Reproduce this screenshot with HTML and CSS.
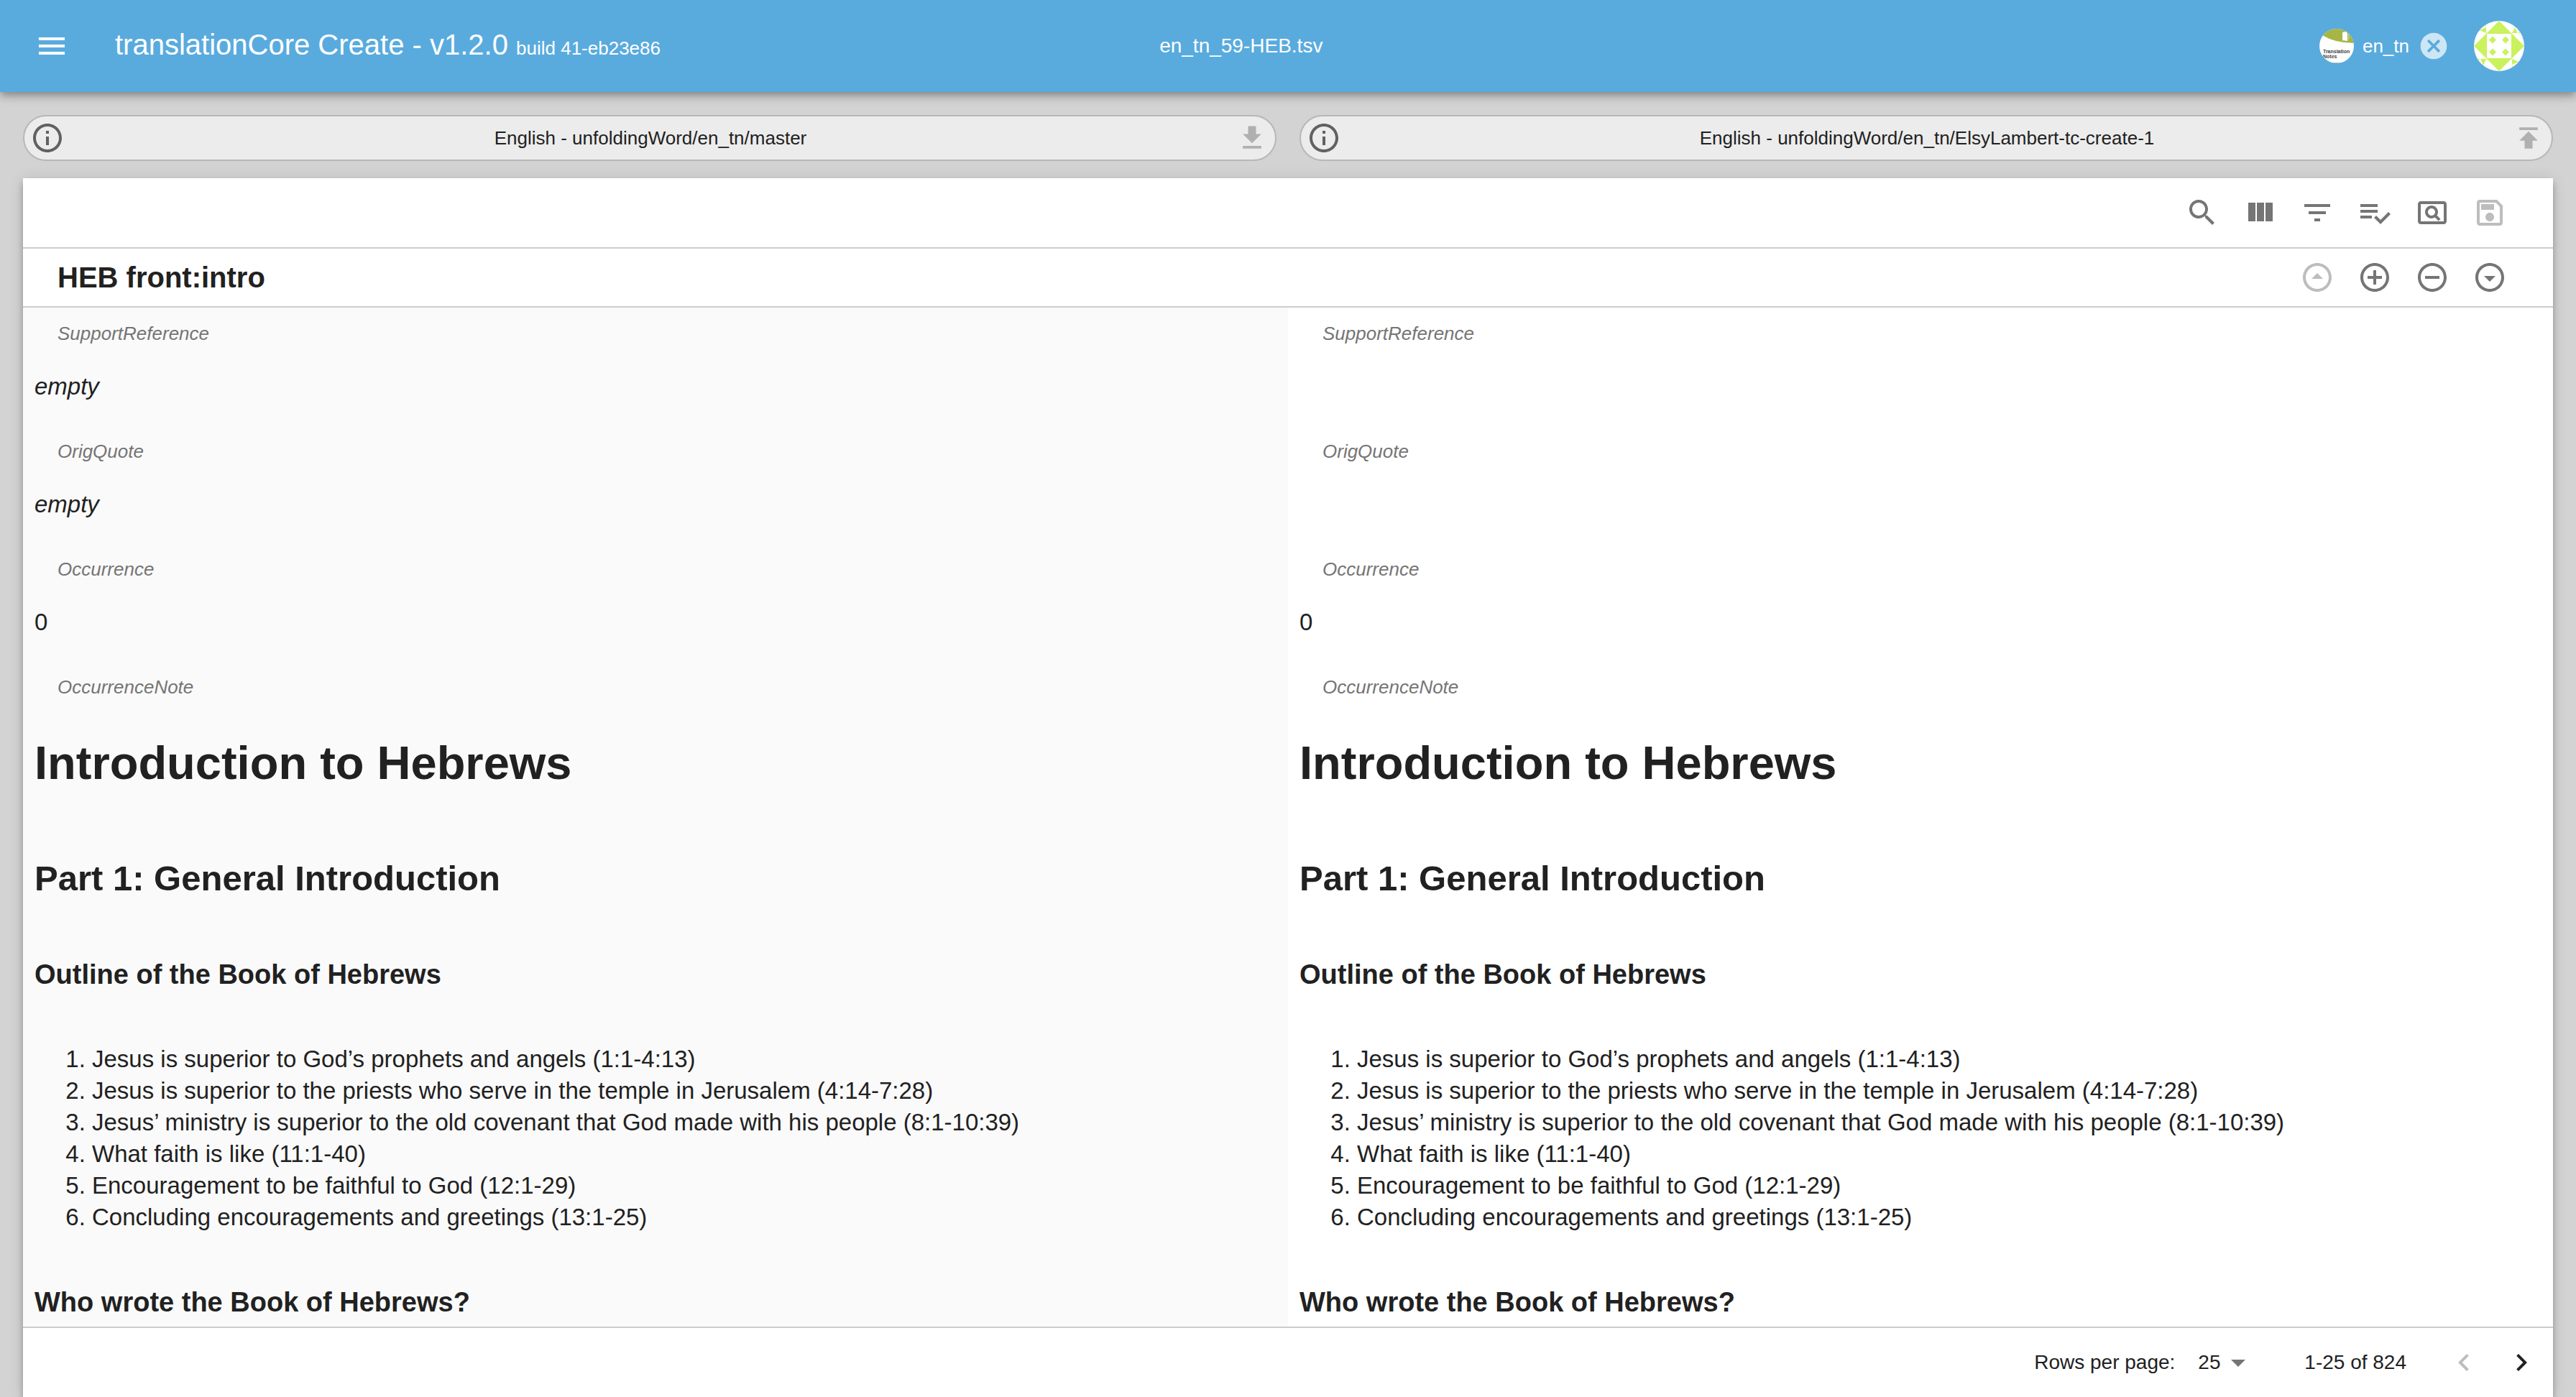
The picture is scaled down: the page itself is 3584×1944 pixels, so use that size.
FILE: index.html
```html
<!DOCTYPE html>
<html lang="en">
<head>
<meta charset="utf-8">
<title>translationCore Create</title>
<link rel="stylesheet" href="styles.css">
</head>
<body>
<header class="app-bar">
  <div class="brand">
    <button class="icon-btn" type="button" aria-label="Menu"><svg class="icon" viewBox="0 0 24 24"><path d="M3 18h18v-2H3v2zm0-5h18v-2H3v2zm0-7v2h18V6H3z"/></svg></button>
    <h1 class="brand-title">translationCore Create - v1.2.0 <small class="build">build 41-eb23e86</small></h1>
  </div>
  <p class="file-name">en_tn_59-HEB.tsv</p>
  <div class="account">
    <div class="repo">
      <svg class="repo-logo" viewBox="0 0 48 48" aria-hidden="true">
        <defs><clipPath id="logo-clip"><circle cx="24" cy="24" r="24"/></clipPath></defs>
        <g clip-path="url(#logo-clip)">
          <rect width="48" height="48" fill="#fff"/>
          <path d="M0 0H48V20Q22 20 4 9L0 6z" fill="#a5b645"/>
          <path d="M32 5l6-1v2h1v11l-7-1z" fill="#fff"/>
          <path d="M38 6h3v8h-3" fill="none" stroke="#d3dba5"/>
          <path d="M12 47.500H36V48H12z" fill="#8a7a5a"/>
          <text class="logo-text" x="5" y="34">Translation</text>
          <text class="logo-text" x="5" y="41">Notes</text>
        </g>
      </svg>
      <span class="repo-name">en_tn</span>
      <button class="icon-btn repo-clear" type="button" aria-label="Remove en_tn"><svg class="icon icon-sm" viewBox="0 0 24 24"><path d="M12 2C6.470 2 2 6.470 2 12s4.470 10 10 10 10-4.470 10-10S17.530 2 12 2zm5 13.590L15.590 17 12 13.410 8.410 17 7 15.590 10.590 12 7 8.410 8.410 7 12 10.590 15.590 7 17 8.410 13.410 12 17 15.590z"/></svg></button>
    </div>
    <button class="icon-btn" type="button" aria-label="Account">
      <svg class="avatar" viewBox="0 0 70 70">
        <defs><clipPath id="avatar-clip"><circle cx="35" cy="35" r="35"/></clipPath></defs>
        <g clip-path="url(#avatar-clip)">
          <rect width="70" height="70" fill="#fff"/>
          <g fill="#c9f25c">
            <path d="M35 0L52 17H18zM35 70L52 53H18zM0 35L17 18V52zM70 35L53 18V52z"/>
            <path d="M17 0v8L8 4zM17 9v8L8 13zM57 9l4 8h-8zM66 9l4 8h-8zM53 53l9 4-9 4zM53 62l9 4-9 4zM0 53h8l-4 9zM9 53h8l-4 9z"/>
            <path d="M17 17H53V53H17zM18 18V52H52V18z" fill-rule="evenodd"/>
            <path d="M26 21.500l5 5-5 5-5-5zM44 21.500l5 5-5 5-5-5zM26 38.500l5 5-5 5-5-5zM44 38.500l5 5-5 5-5-5z"/>
          </g>
        </g>
      </svg>
    </button>
  </div>
</header>

<main class="page">
  <div class="sources">
    <div class="chip">
      <button class="icon-btn chip-info" type="button" aria-label="Source information"><svg class="icon" viewBox="0 0 24 24"><path d="M11 17h2v-6h-2v6zm1-15C6.480 2 2 6.480 2 12s4.480 10 10 10 10-4.480 10-10S17.520 2 12 2zm0 18c-4.410 0-8-3.590-8-8s3.590-8 8-8 8 3.590 8 8-3.590 8-8 8zM11 9h2V7h-2v2z"/></svg></button>
      <span class="chip-label">English - unfoldingWord/en_tn/master</span>
      <button class="icon-btn chip-action" type="button" aria-label="Download"><svg class="icon icon-sm" viewBox="0 0 24 24"><path d="M19 9h-4V3H9v6H5l7 7 7-7zM5 18v2h14v-2H5z"/></svg></button>
    </div>
    <div class="chip">
      <button class="icon-btn chip-info" type="button" aria-label="Target information"><svg class="icon" viewBox="0 0 24 24"><path d="M11 17h2v-6h-2v6zm1-15C6.480 2 2 6.480 2 12s4.480 10 10 10 10-4.480 10-10S17.520 2 12 2zm0 18c-4.410 0-8-3.590-8-8s3.590-8 8-8 8 3.590 8 8-3.590 8-8 8zM11 9h2V7h-2v2z"/></svg></button>
      <span class="chip-label">English - unfoldingWord/en_tn/ElsyLambert-tc-create-1</span>
      <button class="icon-btn chip-action" type="button" aria-label="Publish"><svg class="icon icon-sm" viewBox="0 0 24 24"><path d="M5 4v2h14V4H5zm0 10h4v6h6v-6h4l-7-7-7 7z"/></svg></button>
    </div>
  </div>

  <section class="sheet">
    <div class="tools">
      <button class="icon-btn" type="button" aria-label="Search"><svg class="icon" viewBox="0 0 24 24"><path d="M15.500 14h-.79l-.28-.27C15.410 12.590 16 11.110 16 9.500 16 5.910 13.090 3 9.500 3S3 5.910 3 9.500 5.910 16 9.500 16c1.610 0 3.090-.59 4.230-1.570l.27.28v.79l5 4.990L20.490 19l-4.990-5zm-6 0C7.010 14 5 11.990 5 9.500S7.010 5 9.500 5 14 7.010 14 9.500 11.990 14 9.500 14z"/></svg></button>
      <button class="icon-btn" type="button" aria-label="View columns"><svg class="icon" viewBox="0 0 24 24"><path d="M10 18h5V5h-5v13zm-6 0h5V5H4v13zM16 5v13h5V5h-5z"/></svg></button>
      <button class="icon-btn" type="button" aria-label="Filter table"><svg class="icon" viewBox="0 0 24 24"><path d="M10 18h4v-2h-4v2zM3 6v2h18V6H3zm3 7h12v-2H6v2z"/></svg></button>
      <button class="icon-btn" type="button" aria-label="Validate"><svg class="icon" viewBox="0 0 24 24"><path d="M14 10H2v2h12v-2zm0-4H2v2h12V6zM2 16h8v-2H2v2zm19.500-4.500L23 13l-6.990 7-4.510-4.500L13 14l3.010 3 5.490-5.500z"/></svg></button>
      <button class="icon-btn" type="button" aria-label="Preview"><svg class="icon" viewBox="0 0 24 24"><path d="M11.490 16c.88 0 1.700-.26 2.390-.7l2.440 2.440 1.420-1.420-2.440-2.430c.44-.7.7-1.510.7-2.390C16 9.010 13.990 7 11.500 7S7 9.010 7 11.500 9.010 16 11.490 16zm.01-7c1.380 0 2.500 1.120 2.500 2.500S12.880 14 11.500 14 9 12.880 9 11.500 10.120 9 11.500 9zM20 4H4c-1.100 0-2 .9-2 2v12c0 1.100.9 2 2 2h16c1.100 0 2-.9 2-2V6c0-1.100-.9-2-2-2zm0 14H4V6h16v12z"/></svg></button>
      <button class="icon-btn" type="button" aria-label="Save" disabled><svg class="icon" viewBox="0 0 24 24"><path d="M17 3H5c-1.110 0-2 .9-2 2v14c0 1.100.89 2 2 2h14c1.100 0 2-.9 2-2V7l-4-4zm2 16H5V5h11.170L19 7.830V19zm-7-7c-1.660 0-3 1.340-3 3s1.340 3 3 3 3-1.340 3-3-1.340-3-3-3zM6 6h9v4H6z"/></svg></button>
    </div>

    <div class="row-head">
      <h2 class="row-title">HEB front:intro</h2>
      <div class="row-actions">
        <button class="icon-btn" type="button" aria-label="Move row up" disabled><svg class="icon" viewBox="0 0 24 24"><path d="M12 4c4.410 0 8 3.590 8 8s-3.590 8-8 8-8-3.590-8-8 3.590-8 8-8m0-2C6.480 2 2 6.480 2 12s4.480 10 10 10 10-4.480 10-10S17.520 2 12 2zM8 13l4-4 4 4z"/></svg></button>
        <button class="icon-btn" type="button" aria-label="Add row"><svg class="icon" viewBox="0 0 24 24"><path d="M13 7h-2v4H7v2h4v4h2v-4h4v-2h-4V7zm-1-5C6.480 2 2 6.480 2 12s4.480 10 10 10 10-4.480 10-10S17.520 2 12 2zm0 18c-4.410 0-8-3.590-8-8s3.590-8 8-8 8 3.590 8 8-3.590 8-8 8z"/></svg></button>
        <button class="icon-btn" type="button" aria-label="Delete row"><svg class="icon" viewBox="0 0 24 24"><path d="M7 11v2h10v-2H7zm5-9C6.480 2 2 6.480 2 12s4.480 10 10 10 10-4.480 10-10S17.520 2 12 2zm0 18c-4.410 0-8-3.590-8-8s3.590-8 8-8 8 3.590 8 8-3.590 8-8 8z"/></svg></button>
        <button class="icon-btn" type="button" aria-label="Move row down"><svg class="icon" viewBox="0 0 24 24"><path d="M12 4c4.410 0 8 3.590 8 8s-3.590 8-8 8-8-3.590-8-8 3.590-8 8-8m0-2C6.480 2 2 6.480 2 12s4.480 10 10 10 10-4.480 10-10S17.520 2 12 2zM8 11l4 4 4-4z"/></svg></button>
      </div>
    </div>

    <div class="compare">
      <article class="pane pane-source">
        <p class="field-label">SupportReference</p>
        <p class="field-value"><em>empty</em></p>
        <p class="field-label">OrigQuote</p>
        <p class="field-value"><em>empty</em></p>
        <p class="field-label">Occurrence</p>
        <p class="field-value">0</p>
        <p class="field-label">OccurrenceNote</p>
        <div class="note">
          <h1>Introduction to Hebrews</h1>
          <h2>Part 1: General Introduction</h2>
          <h3>Outline of the Book of Hebrews</h3>
          <ol>
            <li>Jesus is superior to God’s prophets and angels (1:1-4:13)</li>
            <li>Jesus is superior to the priests who serve in the temple in Jerusalem (4:14-7:28)</li>
            <li>Jesus’ ministry is superior to the old covenant that God made with his people (8:1-10:39)</li>
            <li>What faith is like (11:1-40)</li>
            <li>Encouragement to be faithful to God (12:1-29)</li>
            <li>Concluding encouragements and greetings (13:1-25)</li>
          </ol>
          <h3>Who wrote the Book of Hebrews?</h3>
        </div>
      </article>
      <article class="pane">
        <p class="field-label">SupportReference</p>
        <p class="field-value"></p>
        <p class="field-label">OrigQuote</p>
        <p class="field-value"></p>
        <p class="field-label">Occurrence</p>
        <p class="field-value">0</p>
        <p class="field-label">OccurrenceNote</p>
        <div class="note">
          <h1>Introduction to Hebrews</h1>
          <h2>Part 1: General Introduction</h2>
          <h3>Outline of the Book of Hebrews</h3>
          <ol>
            <li>Jesus is superior to God’s prophets and angels (1:1-4:13)</li>
            <li>Jesus is superior to the priests who serve in the temple in Jerusalem (4:14-7:28)</li>
            <li>Jesus’ ministry is superior to the old covenant that God made with his people (8:1-10:39)</li>
            <li>What faith is like (11:1-40)</li>
            <li>Encouragement to be faithful to God (12:1-29)</li>
            <li>Concluding encouragements and greetings (13:1-25)</li>
          </ol>
          <h3>Who wrote the Book of Hebrews?</h3>
        </div>
      </article>
    </div>

    <footer class="pager">
      <label for="rows-per-page">Rows per page:</label>
      <div class="select">
        <select id="rows-per-page"><option>10</option><option selected>25</option><option>50</option><option>100</option></select>
        <svg class="icon select-arrow" viewBox="0 0 24 24" aria-hidden="true"><path d="M7 10l5 5 5-5z"/></svg>
      </div>
      <span class="range">1-25 of 824</span>
      <div class="page-nav">
        <button class="icon-btn" type="button" aria-label="Previous page" disabled><svg class="icon" viewBox="0 0 24 24"><path d="M15.410 7.410L14 6l-6 6 6 6 1.410-1.410L10.830 12z"/></svg></button>
        <button class="icon-btn page-next" type="button" aria-label="Next page"><svg class="icon" viewBox="0 0 24 24"><path d="M10 6L8.590 7.410 13.170 12l-4.580 4.590L10 18l6-6z"/></svg></button>
      </div>
    </footer>
  </section>
</main>
</body>
</html>
```
FILE: styles.css
```css
* {
  box-sizing: border-box;
}

body {
  margin: 0;
  height: 100vh;
  display: flex;
  flex-direction: column;
  overflow: hidden;
  background: #d3d3d3;
  color: #212121;
  font-family: "Liberation Sans", Helvetica, Arial, sans-serif;
  font-size: 33px;
  line-height: 44px;
}

h1, h2, h3, p, ol {
  margin: 0;
}

.icon {
  display: block;
  width: 48px;
  height: 48px;
  fill: currentColor;
}

.icon-sm {
  width: 44px;
  height: 44px;
}

.icon-btn {
  display: block;
  padding: 0;
  border: 0;
  background: none;
  color: #757575;
  cursor: pointer;
}

.icon-btn:disabled {
  color: #bdbdbd;
  cursor: default;
}

/* App bar */
.app-bar {
  position: relative;
  z-index: 1;
  display: grid;
  grid-template-columns: 12fr auto 13fr;
  align-items: center;
  flex-shrink: 0;
  height: 128px;
  padding: 0 48px;
  background: #59abde;
  color: #fff;
  box-shadow: 0 4px 8px -2px rgba(0, 0, 0, .2), 0 8px 10px 0 rgba(0, 0, 0, .14), 0 2px 20px 0 rgba(0, 0, 0, .12);
}

.app-bar .icon-btn {
  color: #fff;
}

.brand {
  display: flex;
  align-items: center;
  gap: 64px;
}

.brand-title {
  font-size: 40px;
  font-weight: 400;
  line-height: 48px;
  white-space: nowrap;
}

.build {
  font-size: 26px;
}

.file-name {
  font-size: 28px;
}

.account {
  display: flex;
  align-items: center;
  justify-content: flex-end;
  gap: 34px;
  padding-right: 24px;
}

.repo {
  display: flex;
  align-items: center;
  font-size: 26px;
}

.repo-logo {
  display: block;
  width: 48px;
  height: 48px;
  margin-right: 12px;
}

.logo-text {
  font-size: 7px;
  font-weight: 700;
  fill: #444;
}

.repo-clear {
  margin-left: 12px;
  opacity: .7;
}

.avatar {
  display: block;
  width: 70px;
  height: 70px;
}

/* Source chips */
.page {
  display: flex;
  flex-direction: column;
  flex: 1;
  min-height: 0;
  padding: 32px 32px 0;
}

.sources {
  display: grid;
  grid-template-columns: 1fr 1fr;
  gap: 32px;
  margin-bottom: 24px;
}

.chip {
  display: flex;
  align-items: center;
  height: 64px;
  padding: 0 10px 0 8px;
  border: 2px solid #b7b7b7;
  border-radius: 32px;
  background: #ececec;
  font-size: 26px;
}

.chip-info {
  color: #616161;
}

.chip-label {
  flex: 1;
  text-align: center;
}

.chip-action {
  color: #b0b0b0;
}

/* Table sheet */
.sheet {
  display: flex;
  flex-direction: column;
  flex: 1;
  min-height: 0;
  background: #fff;
  box-shadow: 0 4px 8px -2px rgba(0, 0, 0, .2), 0 8px 10px 0 rgba(0, 0, 0, .14), 0 2px 20px 0 rgba(0, 0, 0, .12);
}

.tools {
  display: flex;
  align-items: center;
  justify-content: flex-end;
  gap: 32px;
  flex-shrink: 0;
  height: 98px;
  padding: 0 64px;
  border-bottom: 2px solid #ccc;
}

.row-head {
  display: flex;
  align-items: center;
  justify-content: space-between;
  flex-shrink: 0;
  height: 82px;
  padding: 0 64px 0 48px;
  border-bottom: 2px solid #ccc;
}

.row-title {
  font-size: 40px;
}

.row-actions {
  display: flex;
  gap: 32px;
}

.compare {
  display: grid;
  grid-template-columns: 1fr 1fr;
  flex: 1;
  min-height: 0;
  overflow: auto;
  scrollbar-width: none;
}

.pane {
  padding: 14px 16px 0;
}

.pane-source {
  background: #fafafa;
}

.field-label {
  padding-left: 32px;
  color: #757575;
  font-size: 26px;
  font-style: italic;
}

.field-value {
  height: 120px;
  padding-top: 30px;
}

.note h1 {
  padding-top: 48px;
  font-size: 65px;
  line-height: 72px;
}

.note h2 {
  padding-top: 96px;
  font-size: 49px;
  line-height: 56px;
}

.note h3 {
  padding-top: 84px;
  font-size: 38px;
  line-height: 44px;
}

.note ol {
  padding: 74px 0 0 80px;
}

.note ol + h3 {
  padding-top: 74px;
}

/* Pagination */
.pager {
  display: flex;
  align-items: center;
  justify-content: flex-end;
  flex-shrink: 0;
  height: 98px;
  padding-right: 20px;
  border-top: 2px solid #ccc;
  font-size: 28px;
}

.select {
  display: flex;
  align-items: center;
  position: relative;
  margin: 0 68px 0 32px;
}

.select select {
  width: 80px;
  height: 48px;
  padding: 0;
  border: 0;
  appearance: none;
  background: none;
  color: inherit;
  font: inherit;
}

.select-arrow {
  position: absolute;
  right: 0;
  color: #757575;
  pointer-events: none;
}

.page-nav {
  display: flex;
  gap: 32px;
  margin-left: 56px;
}

.page-next {
  color: #212121;
}
```
